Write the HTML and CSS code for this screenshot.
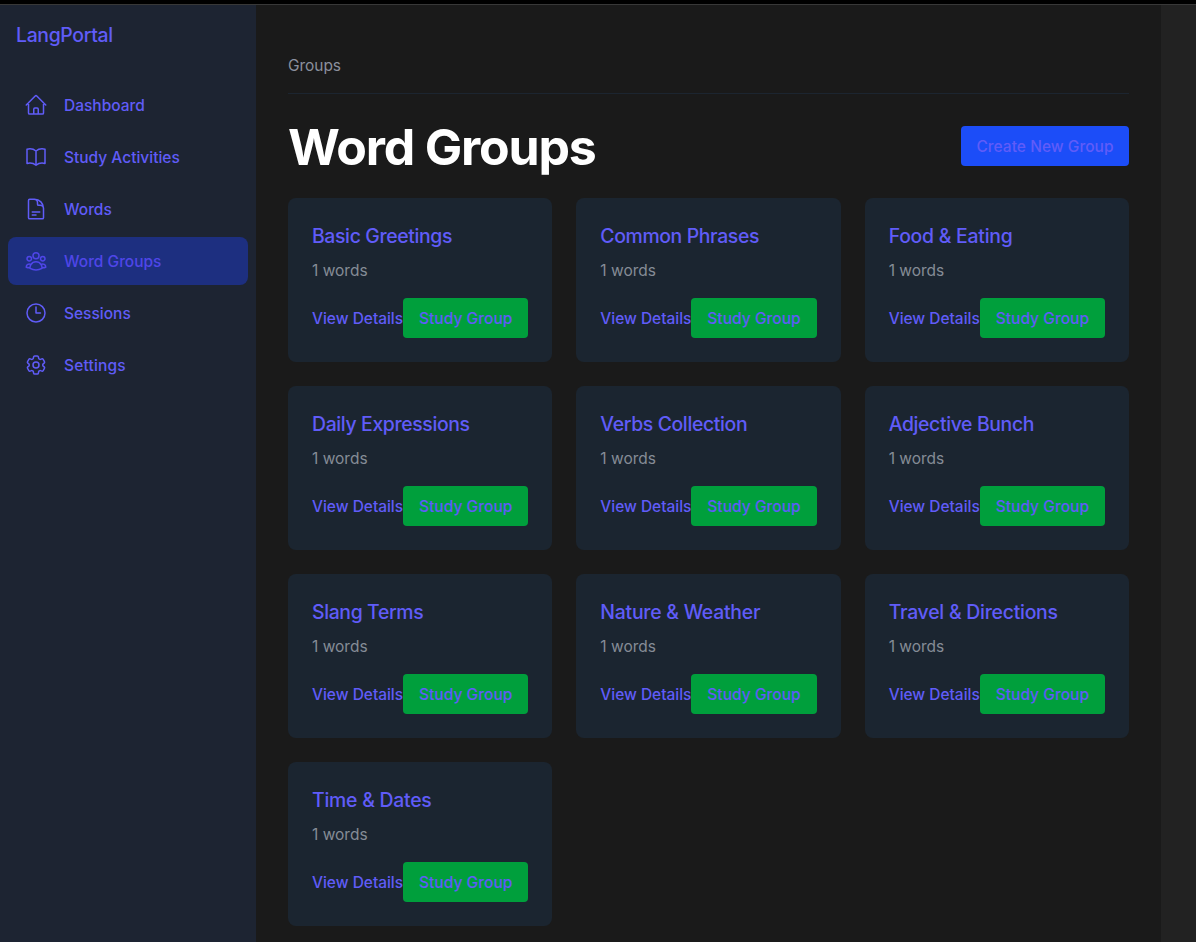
FILE: index.html
```html
<!DOCTYPE html>
<html lang="en">
<head>
<meta charset="utf-8">
<title>LangPortal</title>
<link rel="stylesheet" href="styles.css">
</head>
<body>
<div class="app">
  <aside class="sidebar">
    <div class="brand">LangPortal</div>
    <nav class="nav">
      <a class="nav-item"><svg class="icon" viewBox="0 0 24 24"><path d="m2.25 12 8.954-8.955c.44-.439 1.152-.439 1.591 0L21.75 12M4.5 9.75v10.125c0 .621.504 1.125 1.125 1.125H9.75v-4.875c0-.621.504-1.125 1.125-1.125h2.25c.621 0 1.125.504 1.125 1.125V21h4.125c.621 0 1.125-.504 1.125-1.125V9.75M8.25 21h8.25"/></svg><span>Dashboard</span></a>
      <a class="nav-item"><svg class="icon" viewBox="0 0 24 24"><path d="M12 6.042A8.967 8.967 0 0 0 6 3.75c-1.052 0-2.062.18-3 .512v14.25A8.987 8.987 0 0 1 6 18c2.305 0 4.408.867 6 2.292m0-14.25a8.966 8.966 0 0 1 6-2.292c1.052 0 2.062.18 3 .512v14.25A8.987 8.987 0 0 0 18 18a8.967 8.967 0 0 0-6 2.292m0-14.25v14.25"/></svg><span>Study Activities</span></a>
      <a class="nav-item"><svg class="icon" viewBox="0 0 24 24"><path d="M19.5 14.25v-2.625a3.375 3.375 0 0 0-3.375-3.375h-1.5A1.125 1.125 0 0 1 13.5 7.125v-1.5a3.375 3.375 0 0 0-3.375-3.375H8.25m0 12.75h7.5m-7.5 3H12M10.5 2.25H5.625c-.621 0-1.125.504-1.125 1.125v17.25c0 .621.504 1.125 1.125 1.125h12.75c.621 0 1.125-.504 1.125-1.125V11.25a9 9 0 0 0-9-9Z"/></svg><span>Words</span></a>
      <a class="nav-item active"><svg class="icon" viewBox="0 0 24 24"><path d="M18 18.72a9.094 9.094 0 0 0 3.741-.479 3 3 0 0 0-4.682-2.72m.94 3.198.001.031c0 .225-.012.447-.037.666A11.944 11.944 0 0 1 12 21c-2.17 0-4.207-.576-5.963-1.584A6.062 6.062 0 0 1 6 18.719m12 0a5.971 5.971 0 0 0-.941-3.197m0 0A5.995 5.995 0 0 0 12 12.75a5.995 5.995 0 0 0-5.058 2.772m0 0a3 3 0 0 0-4.681 2.72 8.986 8.986 0 0 0 3.74.477m.94-3.197a5.971 5.971 0 0 0-.94 3.197M15 6.75a3 3 0 1 1-6 0 3 3 0 0 1 6 0Zm6 3a2.25 2.25 0 1 1-4.5 0 2.25 2.25 0 0 1 4.5 0Zm-13.5 0a2.25 2.25 0 1 1-4.5 0 2.25 2.25 0 0 1 4.5 0Z"/></svg><span>Word Groups</span></a>
      <a class="nav-item"><svg class="icon" viewBox="0 0 24 24"><path d="M12 6v6h4.5m4.5 0a9 9 0 1 1-18 0 9 9 0 0 1 18 0Z"/></svg><span>Sessions</span></a>
      <a class="nav-item wide"><svg class="icon" viewBox="0 0 24 24"><path d="M9.594 3.94c.09-.542.56-.94 1.11-.94h2.593c.55 0 1.02.398 1.11.94l.213 1.281c.063.374.313.686.645.87.074.04.147.083.22.127.325.196.72.257 1.075.124l1.217-.456a1.125 1.125 0 0 1 1.37.49l1.296 2.247a1.125 1.125 0 0 1-.26 1.431l-1.003.827c-.293.241-.438.613-.43.992a7.723 7.723 0 0 1 0 .255c-.008.378.137.75.43.991l1.004.827c.424.35.534.955.26 1.43l-1.298 2.247a1.125 1.125 0 0 1-1.369.491l-1.217-.456c-.355-.133-.75-.072-1.076.124a6.47 6.47 0 0 1-.22.128c-.331.183-.581.495-.644.869l-.213 1.281c-.09.543-.56.94-1.11.94h-2.594c-.55 0-1.019-.398-1.11-.94l-.213-1.281c-.062-.374-.312-.686-.644-.87a6.52 6.52 0 0 1-.22-.127c-.325-.196-.72-.257-1.076-.124l-1.217.456a1.125 1.125 0 0 1-1.369-.49l-1.297-2.247a1.125 1.125 0 0 1 .26-1.431l1.004-.827c.292-.24.437-.613.43-.991a6.932 6.932 0 0 1 0-.255c.007-.38-.138-.751-.43-.992l-1.004-.827a1.125 1.125 0 0 1-.26-1.43l1.297-2.247a1.125 1.125 0 0 1 1.37-.491l1.216.456c.356.133.751.072 1.076-.124.072-.044.146-.086.22-.128.332-.183.582-.495.644-.869l.214-1.28Z"/><path d="M15 12a3 3 0 1 1-6 0 3 3 0 0 1 6 0Z"/></svg><span>Settings</span></a>
    </nav>
  </aside>
  <main class="main">
    <div class="breadcrumb">Groups</div>
    <header class="head">
      <h1 class="title">Word Groups</h1>
      <button class="btn btn-create">Create New Group</button>
    </header>
    <section class="grid">
      <article class="card"><h2 class="card-title">Basic Greetings</h2><p class="count">1 words</p><div class="actions"><a class="link">View Details</a><button class="btn btn-study">Study Group</button></div></article>
      <article class="card"><h2 class="card-title">Common Phrases</h2><p class="count">1 words</p><div class="actions"><a class="link">View Details</a><button class="btn btn-study">Study Group</button></div></article>
      <article class="card"><h2 class="card-title loose">Food &amp; Eating</h2><p class="count">1 words</p><div class="actions"><a class="link">View Details</a><button class="btn btn-study">Study Group</button></div></article>
      <article class="card"><h2 class="card-title">Daily Expressions</h2><p class="count">1 words</p><div class="actions"><a class="link">View Details</a><button class="btn btn-study">Study Group</button></div></article>
      <article class="card"><h2 class="card-title">Verbs Collection</h2><p class="count">1 words</p><div class="actions"><a class="link">View Details</a><button class="btn btn-study">Study Group</button></div></article>
      <article class="card"><h2 class="card-title">Adjective Bunch</h2><p class="count">1 words</p><div class="actions"><a class="link">View Details</a><button class="btn btn-study">Study Group</button></div></article>
      <article class="card"><h2 class="card-title">Slang Terms</h2><p class="count">1 words</p><div class="actions"><a class="link">View Details</a><button class="btn btn-study">Study Group</button></div></article>
      <article class="card"><h2 class="card-title loose">Nature &amp; Weather</h2><p class="count">1 words</p><div class="actions"><a class="link">View Details</a><button class="btn btn-study">Study Group</button></div></article>
      <article class="card"><h2 class="card-title loose">Travel &amp; Directions</h2><p class="count">1 words</p><div class="actions"><a class="link">View Details</a><button class="btn btn-study">Study Group</button></div></article>
      <article class="card"><h2 class="card-title loose">Time &amp; Dates</h2><p class="count">1 words</p><div class="actions"><a class="link">View Details</a><button class="btn btn-study">Study Group</button></div></article>
    </section>
  </main>
</div>
</body>
</html>
```
FILE: styles.css
```css
* { box-sizing: border-box; margin: 0; padding: 0; }
body {
  height: 942px;
  overflow: hidden;
  background: #222222;
  border-top: 4px solid #000;
  font-family: Inter, "Liberation Sans", sans-serif;
  font-size: 15.5px;
  line-height: 24px;
  color: #605cf8;
}
.app { display: flex; height: 938px; border-top: 1px solid #383838; }
.sidebar { width: 256px; flex: none; background: #1d2432; }
.brand { padding: 16px; font-size: 19.4px; line-height: 28px; font-weight: 500; letter-spacing: -0.33px; }
.nav { display: flex; flex-direction: column; gap: 4px; padding: 16px 8px 0; }
.nav-item {
  display: flex; align-items: center; gap: 16px; height: 48px;
  padding: 0 16px; border-radius: 8px; font-weight: 500; letter-spacing: 0;
}
.nav-item span { padding-top: 2px; }
.wide { letter-spacing: 0.18px; }
.active { background: #1d2f80; color: #4f46e8; }
.icon {
  width: 24px; height: 24px; fill: none; stroke: currentColor;
  stroke-width: 1.5; stroke-linecap: round; stroke-linejoin: round;
}
.main { width: 905px; flex: none; background: #1a1a1a; padding: 32px 32px 0; }
.breadcrumb {
  height: 57px; padding-top: 17px; margin-bottom: 24px;
  border-bottom: 1px solid #1c2530; color: #8b909d; letter-spacing: -0.05px;
}
.head { display: flex; justify-content: space-between; align-items: center; height: 56px; margin-bottom: 24px; }
.title { padding-top: 2px; font-size: 50px; line-height: 56px; font-weight: 700; color: #fff; letter-spacing: -1.17px; }
.btn { height: 40px; padding-top: 2px; border: 0; border-radius: 4px; font: 500 15.5px/24px Inter, sans-serif; color: #605cf8; white-space: nowrap; }
.btn-create { width: 168px; background: #1c4df8; letter-spacing: 0.03px; }
.btn-study { width: 125.3px; flex: none; background: #009f3c; letter-spacing: 0.05px; }
.grid { display: grid; grid-template-columns: repeat(3, 1fr); gap: 24px; }
.card { height: 164px; padding: 24px; border-radius: 8px; background: #1b2530; }
.card-title { font-size: 19.4px; line-height: 28px; font-weight: 500; letter-spacing: -0.36px; margin-bottom: 8px; white-space: nowrap; }
.loose { letter-spacing: -0.24px; }
.count { padding-top: 1px; color: #858c96; letter-spacing: 0; margin-bottom: 15px; }
.actions { display: flex; align-items: center; justify-content: space-between; }
.link { width: 91px; padding-top: 2px; font-weight: 500; letter-spacing: -0.02px; white-space: nowrap; }
```
